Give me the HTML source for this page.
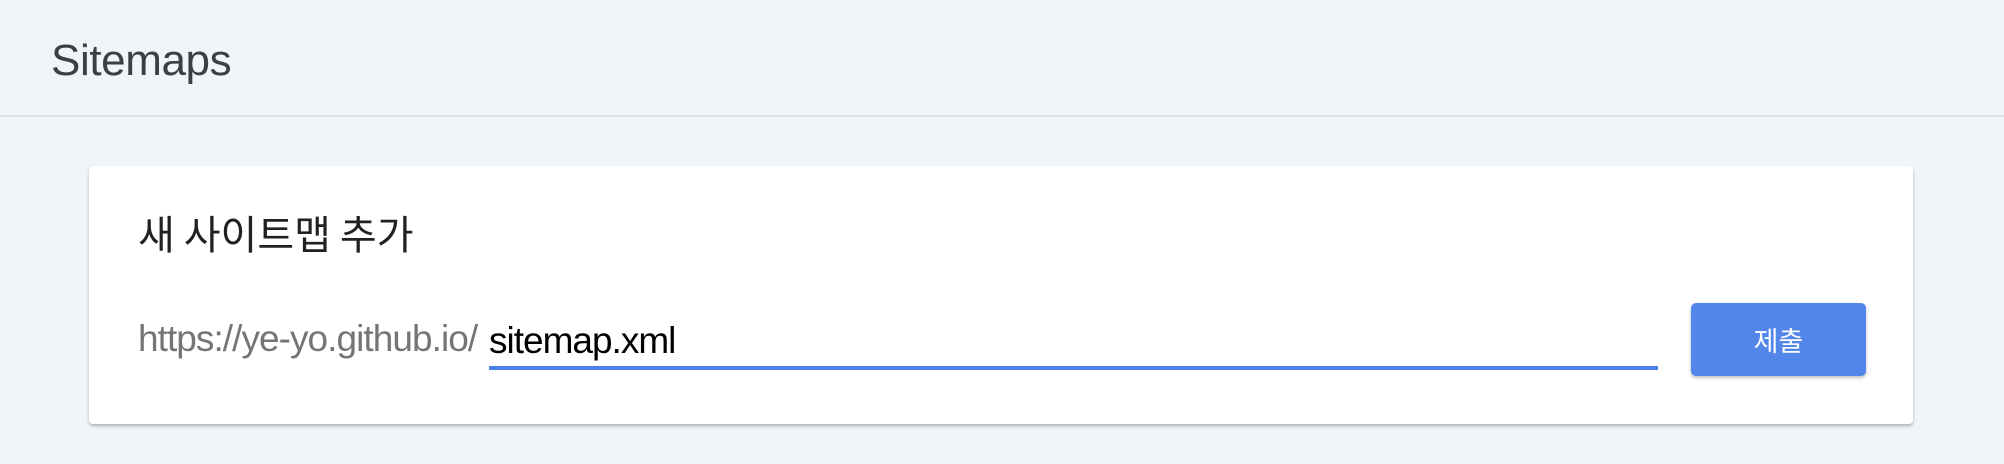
<!DOCTYPE html>
<html><head><meta charset="utf-8"><style>
body{margin:0;width:2004px;height:464px;background:#f1f4f9;font-family:"Liberation Sans","Noto Sans CJK KR",sans-serif;position:relative;overflow:hidden}
div{line-height:1;white-space:nowrap}
.h{position:absolute;left:51px;top:39px;font-size:44px;color:#3c4043;letter-spacing:-0.4px}
.line{position:absolute;left:0;top:115px;width:2004px;height:2px;background:#dde1e5}
.card{position:absolute;left:89px;top:166px;width:1824px;height:258px;background:#fff;border-radius:4px;box-shadow:0 2px 3px rgba(0,0,0,.28)}
.t{position:absolute;left:49px;top:46px;font-size:40px;color:#202124;font-family:"Noto Sans CJK KR",sans-serif}
.u{position:absolute;left:49px;top:154px;font-size:37px;color:#757575;letter-spacing:-0.95px}
.v{position:absolute;left:400px;top:156px;font-size:37px;color:#000;letter-spacing:-1px}
.ul{position:absolute;left:400px;top:200px;width:1169px;height:4px;background:#4a80e8}
.b{position:absolute;left:1602px;top:137px;width:175px;height:73px;background:#5286e9;border-radius:5px;box-shadow:0 2px 3px rgba(0,0,0,.25);color:#fff;font-size:27px;font-family:"Noto Sans CJK KR",sans-serif;display:flex;align-items:center;justify-content:center}
</style></head><body>
<div class="h">Sitemaps</div>
<div class="line"></div>
<div class="card">
<div class="t">새 사이트맵 추가</div>
<div class="u">https://ye-yo.github.io/</div>
<div class="v">sitemap.xml</div>
<div class="ul"></div>
<div class="b">제출</div>
</div>
</body></html>
